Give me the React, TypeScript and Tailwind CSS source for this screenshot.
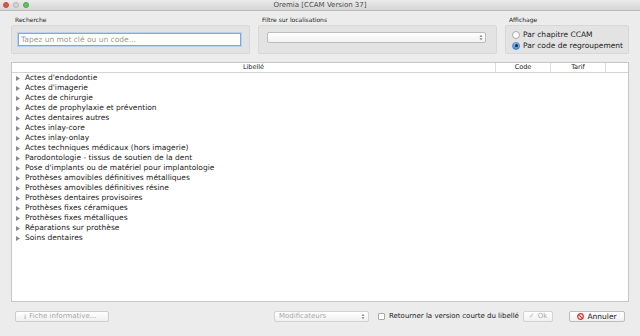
const items = [
  "Actes d'endodontie",
  "Actes d'imagerie",
  'Actes de chirurgie',
  'Actes de prophylaxie et prévention',
  'Actes dentaires autres',
  'Actes inlay-core',
  'Actes inlay-onlay',
  'Actes techniques médicaux (hors imagerie)',
  'Parodontologie - tissus de soutien de la dent',
  "Pose d'implants ou de matériel pour implantologie",
  'Prothèses amovibles définitives métalliques',
  'Prothèses amovibles définitives résine',
  'Prothèses dentaires provisoires',
  'Prothèses fixes céramiques',
  'Prothèses fixes métalliques',
  'Réparations sur prothèse',
  'Soins dentaires',
];

function Arrows() {
  return (
    <svg width="4" height="7" viewBox="0 0 4 7" className="shrink-0">
      <path d="M0.5 2.8 L2 1 L3.5 2.8 Z" fill="#777" />
      <path d="M0.5 4.2 L2 6 L3.5 4.2 Z" fill="#777" />
    </svg>
  );
}

export default function App() {
  return (
    <div
      className="w-[640px] h-[336px] bg-[#ececec] flex flex-col overflow-hidden text-[#222]"
      style={{ fontFamily: '"DejaVu Sans", "Liberation Sans", sans-serif' }}
    >
      {/* Title bar */}
      <div className="h-[11px] shrink-0 relative flex items-center justify-center bg-gradient-to-b from-[#ebebeb] to-[#d6d6d6] border-b border-[#b8b8b8]">
        <div className="absolute left-[3px] top-[2px] flex gap-[4px]">
          <span className="w-[6px] h-[6px] rounded-full bg-[#e0534c] border border-[#c44a43]" />
          <span className="w-[6px] h-[6px] rounded-full bg-[#d6d6d6] border border-[#b5b5b5]" />
          <span className="w-[6px] h-[6px] rounded-full bg-[#62c554] border border-[#4fa544]" />
        </div>
        <span className="text-[7px] leading-none text-[#4a4a4a]">Oremia [CCAM Version 37]</span>
      </div>

      {/* Top filters */}
      <div className="flex gap-[8px] px-[11px] pt-[4px] shrink-0">
        <div className="w-[239px] flex flex-col">
          <span className="text-[6px] leading-[10px] h-[10px] pl-[4px]">Recherche</span>
          <div className="h-[29px] bg-[#e3e3e3] border border-[#d8d8d8] rounded-[2px] pl-[6px] pr-[8px] pt-[7px]">
            <div className="h-[13px] bg-white border border-[#7fa7d8] shadow-[0_0_0_1px_#b9d0ee] flex items-center pl-[2px]">
              <span className="text-[7.5px] leading-none text-[#9a9a9a]">Tapez un mot clé ou un code...</span>
            </div>
          </div>
        </div>
        <div className="w-[239px] flex flex-col">
          <span className="text-[6px] leading-[10px] h-[10px] pl-[4px]">Filtre sur localisations</span>
          <div className="h-[29px] bg-[#e3e3e3] border border-[#d8d8d8] rounded-[2px] pl-[8px] pr-[10px] pt-[6px]">
            <div className="h-[11px] bg-gradient-to-b from-white to-[#f1f1f1] border border-[#bdbdbd] rounded-[2px] flex items-center justify-end pr-[2px]">
              <Arrows />
            </div>
          </div>
        </div>
        <div className="w-[124px] flex flex-col">
          <span className="text-[6px] leading-[10px] h-[10px] pl-[4px]">Affichage</span>
          <div className="h-[29px] bg-[#e3e3e3] border border-[#d8d8d8] rounded-[2px] pl-[6px] pt-[4px] flex flex-col gap-[2px]">
            <div className="flex items-center gap-[3px] h-[9px]">
              <span className="w-[8px] h-[8px] rounded-full bg-white border border-[#a8a8a8]" />
              <span className="text-[7.5px] leading-none">Par chapitre CCAM</span>
            </div>
            <div className="flex items-center gap-[3px] h-[9px]">
              <span className="w-[8px] h-[8px] rounded-full bg-gradient-to-b from-[#8fc1f0] to-[#3d8ee0] border border-[#4a86c5] flex items-center justify-center">
                <span className="w-[3px] h-[3px] rounded-full bg-[#1c2c40]" />
              </span>
              <span className="text-[7.5px] leading-none">Par code de regroupement</span>
            </div>
          </div>
        </div>
      </div>

      {/* Table */}
      <div className="mx-[11px] mt-[8px] h-[240px] bg-white border border-[#c6c6c6] flex flex-col shrink-0">
        <div className="h-[10px] flex border-b border-[#d4d4d4] text-[6.5px] leading-[9px]">
          <div className="w-[484px] text-center border-r border-[#dcdcdc]">Libellé</div>
          <div className="w-[55px] text-center border-r border-[#dcdcdc]">Code</div>
          <div className="w-[55px] text-center border-r border-[#dcdcdc]">Tarif</div>
          <div className="flex-1" />
        </div>
        <div className="flex flex-col">
          {items.map((it) => (
            <div key={it} className="h-[10px] flex items-center pl-[4px] gap-[5px]">
              <svg width="4" height="5" viewBox="0 0 4 5" className="shrink-0">
                <path d="M0 0 L4 2.5 L0 5 Z" fill="#8a8a8a" />
              </svg>
              <span className="text-[7.5px] leading-none">{it}</span>
            </div>
          ))}
        </div>
      </div>

      {/* Bottom bar */}
      <div className="flex items-center px-[15px] mt-[9px] h-[11px] whitespace-nowrap">
        <div className="shrink-0 w-[94px] h-[11px] bg-gradient-to-b from-white to-[#f0f0f0] border border-[#cdcdcd] rounded-[2px] flex items-center pl-[8px] gap-[3px]">
          <span className="text-[6px] leading-none text-[#bbb]">ℹ</span>
          <span className="text-[7px] leading-none text-[#a5a5a5]">Fiche informative...</span>
        </div>
        <div className="shrink-0 ml-[165px] w-[95px] h-[11px] bg-gradient-to-b from-white to-[#f0f0f0] border border-[#d2d2d2] rounded-[2px] flex items-center justify-between pl-[4px] pr-[3px]">
          <span className="text-[7px] leading-none text-[#a8a8a8]">Modificateurs</span>
          <Arrows />
        </div>
        <div className="shrink-0 ml-[9px] flex items-center gap-[4px]">
          <span className="w-[7px] h-[7px] bg-white border border-[#a8a8a8] rounded-[1px]" />
          <span className="w-[129px] text-[7px] leading-none">Retourner la version courte du libellé</span>
        </div>
        <div className="shrink-0 ml-[5px] w-[30px] h-[11px] bg-gradient-to-b from-white to-[#f0f0f0] border border-[#d2d2d2] rounded-[2px] flex items-center justify-center gap-[3px]">
          <span className="text-[7px] leading-none text-[#9fc79a]">✓</span>
          <span className="text-[7px] leading-none text-[#aaa]">Ok</span>
        </div>
        <div className="shrink-0 ml-[16px] w-[56px] h-[11px] bg-gradient-to-b from-white to-[#f0f0f0] border border-[#bdbdbd] rounded-[2px] flex items-center justify-center gap-[3px]">
          <svg width="7" height="7" viewBox="0 0 8 8">
            <circle cx="4" cy="4" r="3.2" fill="none" stroke="#d8302c" strokeWidth="1.4" />
            <path d="M1.8 1.8 L6.2 6.2" stroke="#d8302c" strokeWidth="1.4" />
          </svg>
          <span className="text-[7.5px] leading-none">Annuler</span>
        </div>
      </div>
    </div>
  );
}
